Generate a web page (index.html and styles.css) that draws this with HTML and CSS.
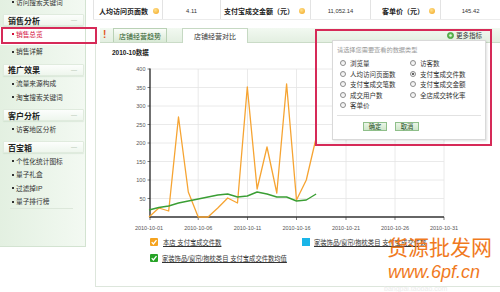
FILE: index.html
```html
<!DOCTYPE html>
<html lang="zh-CN">
<head>
<meta charset="utf-8">
<title>量子统计 - 销售总览</title>
<link rel="stylesheet" href="styles.css">
</head>
<body>
<div class="page">
  <aside class="sidebar">
    <ul class="items first">
      <li>访问搜索关键词</li>
    </ul>
    <section class="group">
      <h3>销售分析<span class="fold">—</span></h3>
      <ul class="items">
        <li class="active">销售总览</li>
        <li>销售详解</li>
      </ul>
    </section>
    <section class="group">
      <h3>推广效果<span class="fold">—</span></h3>
      <ul class="items">
        <li>流量来源构成</li>
        <li>淘宝搜索关键词</li>
      </ul>
    </section>
    <section class="group">
      <h3>客户分析<span class="fold">—</span></h3>
      <ul class="items">
        <li>访客地区分析</li>
      </ul>
    </section>
    <section class="group">
      <h3>百宝箱<span class="fold">—</span></h3>
      <ul class="items">
        <li>个性化统计图标</li>
        <li>量子礼盒</li>
        <li>过滤掉IP</li>
        <li>量子排行榜</li>
      </ul>
    </section>
  </aside>

  <main class="main">
    <div class="stats">
      <div class="cell label c1">人均访问页面数<span class="tip"></span></div>
      <div class="cell c2">4.11</div>
      <div class="cell label c3">支付宝成交金额（元）<span class="tip"></span></div>
      <div class="cell c4">11,052.14</div>
      <div class="cell label c5">客单价（元）<span class="tip"></span></div>
      <div class="cell c6">145.42</div>
    </div>

    <div class="tabbar">
      <span class="alert">!</span>
      <span class="tab">店铺经营趋势</span>
      <span class="tab on">店铺经营对比</span>
    </div>

    <div class="panel">
      <div class="title">2010-10数据</div>
      <svg class="chart" width="404" height="177" viewBox="96 57 404 177">
        <g stroke="#e4e4e4" stroke-width="0.8">
          <line x1="150" y1="198.5" x2="444" y2="198.5"/>
          <line x1="150" y1="180" x2="444" y2="180"/>
          <line x1="150" y1="161.5" x2="444" y2="161.5"/>
          <line x1="150" y1="143" x2="444" y2="143"/>
          <line x1="150" y1="124.5" x2="444" y2="124.5"/>
          <line x1="150" y1="106" x2="444" y2="106"/>
          <line x1="150" y1="87.5" x2="444" y2="87.5"/>
          <line x1="150" y1="69" x2="444" y2="69"/>
          <line x1="198.2" y1="69" x2="198.2" y2="217"/>
          <line x1="247.5" y1="69" x2="247.5" y2="217"/>
          <line x1="296.5" y1="69" x2="296.5" y2="217"/>
          <line x1="346" y1="69" x2="346" y2="217"/>
          <line x1="395" y1="69" x2="395" y2="217"/>
          <line x1="444" y1="69" x2="444" y2="217"/>
        </g>
        <g stroke="#444" stroke-width="0.7">
          <line x1="147.5" y1="69" x2="150" y2="69"/>
          <line x1="147.5" y1="87.5" x2="150" y2="87.5"/>
          <line x1="147.5" y1="106" x2="150" y2="106"/>
          <line x1="147.5" y1="124.5" x2="150" y2="124.5"/>
          <line x1="147.5" y1="143" x2="150" y2="143"/>
          <line x1="147.5" y1="161.5" x2="150" y2="161.5"/>
          <line x1="147.5" y1="180" x2="150" y2="180"/>
          <line x1="147.5" y1="198.5" x2="150" y2="198.5"/>
          <line x1="150" y1="217" x2="150" y2="220"/>
          <line x1="198.2" y1="217" x2="198.2" y2="220"/>
          <line x1="247.5" y1="217" x2="247.5" y2="220"/>
          <line x1="296.5" y1="217" x2="296.5" y2="220"/>
          <line x1="346" y1="217" x2="346" y2="220"/>
          <line x1="395" y1="217" x2="395" y2="220"/>
          <line x1="444" y1="217" x2="444" y2="220"/>
        </g>
        <line x1="150" y1="68.5" x2="150" y2="217.6" stroke="#222" stroke-width="1.3"/>
        <line x1="149.4" y1="217" x2="444" y2="217" stroke="#333" stroke-width="1.3"/>
        <g class="ylab" text-anchor="end">
          <text x="145.5" y="71">400</text>
          <text x="145.5" y="89.5">350</text>
          <text x="145.5" y="108">300</text>
          <text x="145.5" y="126.5">250</text>
          <text x="145.5" y="145">200</text>
          <text x="145.5" y="163.5">150</text>
          <text x="145.5" y="182">100</text>
          <text x="145.5" y="200.5">50</text>
        </g>
        <g class="xlab" text-anchor="middle">
          <text x="149" y="230">2010-10-01</text>
          <text x="198.2" y="230">2010-10-06</text>
          <text x="247.5" y="230">2010-10-11</text>
          <text x="296.5" y="230">2010-10-16</text>
          <text x="346" y="230">2010-10-21</text>
          <text x="395" y="230">2010-10-26</text>
          <text x="444" y="230">2010-10-31</text>
        </g>
        <polyline fill="none" stroke="#f6a432" stroke-width="1.3" stroke-linejoin="round"
          points="149,217 158.8,208 168.7,211 178.5,117 188.3,192 198.2,217 208,217 217.8,208 227.7,198 237.5,203 247.3,87 257.1,189 267,147 276.8,193 286.6,84 296.5,200 306.3,180 316.1,138"/>
        <polyline fill="none" stroke="#3a9e34" stroke-width="1.4" stroke-linejoin="round"
          points="149,210 158.8,207.5 168.7,206 178.5,203 188.3,201 198.2,199 208,197 217.8,195 227.7,194 237.5,197 247.3,196 257.1,192 267,194 276.8,197 286.6,197 296.5,201 306.3,200 316.1,194"/>
      </svg>
      <div class="legend">
        <div class="legend-row">
          <div class="legend-item wide">
            <svg class="chk" width="8" height="8" viewBox="0 0 8 8"><rect width="8" height="8" rx="1" fill="#f5a31f"/><path d="M1.7 4.1 L3.4 5.9 L6.5 2.1" fill="none" stroke="#fff" stroke-width="1.3"/></svg>
            <span class="ltext">本店 支付宝成交件数</span>
          </div>
          <div class="legend-item">
            <span class="swatch"></span>
            <span class="ltext">家装饰品/窗帘/抱枕类目 支付宝成交件数</span>
          </div>
        </div>
        <div class="legend-row">
          <div class="legend-item">
            <svg class="chk" width="8" height="8" viewBox="0 0 8 8"><rect width="8" height="8" rx="1" fill="#27a327"/><path d="M1.7 4.1 L3.4 5.9 L6.5 2.1" fill="none" stroke="#fff" stroke-width="1.3"/></svg>
            <span class="ltext">家装饰品/窗帘/抱枕类目 支付宝成交件数均值</span>
          </div>
        </div>
      </div>
    </div>
  </main>
</div>

<div class="side-mark"></div>

<div class="popup">
  <div class="more">
    <svg width="7" height="7" viewBox="0 0 7 7"><circle cx="3.5" cy="3.5" r="3.1" fill="#5cb84e" stroke="#2f8a2a" stroke-width="0.6"/><circle cx="3.5" cy="3.5" r="1.3" fill="#e2f4dc"/></svg>
    <span>更多指标</span>
  </div>
  <div class="chooser">
    <p class="hint">请选择您需要查看的数据类型</p>
    <div class="options">
      <label class="opt"><span class="radio"></span>浏览量</label>
      <label class="opt"><span class="radio"></span>访客数</label>
      <label class="opt"><span class="radio"></span>人均访问页面数</label>
      <label class="opt"><span class="radio checked"></span>支付宝成交件数</label>
      <label class="opt"><span class="radio"></span>支付宝成交笔数</label>
      <label class="opt"><span class="radio"></span>支付宝成交金额</label>
      <label class="opt"><span class="radio"></span>成交用户数</label>
      <label class="opt"><span class="radio"></span>全店成交转化率</label>
      <label class="opt"><span class="radio"></span>客单价</label>
    </div>
    <div class="actions">
      <button class="btn">确定</button>
      <button class="btn">取消</button>
    </div>
  </div>
</div>

<div class="watermark">
  <div class="wm-cn">货源批发网</div>
  <div class="wm-en">www.6pf.cn</div>
  <div class="wm-faint">bangpai.taobao.com</div>
</div>
</body>
</html>
```

FILE: styles.css
```css
* { margin: 0; padding: 0; box-sizing: border-box; }
html, body { width: 500px; height: 292px; overflow: hidden; background: #fff; }
body {
  position: relative;
  font-family: "Liberation Sans", "Noto Sans CJK SC", sans-serif;
  color: #333;
}

.page { display: flex; align-items: flex-start; }

/* ---------- sidebar ---------- */
.sidebar {
  flex: none;
  width: 86px;
  height: 247px;
  overflow: hidden;
  background: linear-gradient(90deg, #e3f0e1, #edf6ec 65%, #f3f9f2);
  border-right: 1px solid #d3e3d1;
  border-bottom: 1px solid #d3e3d1;
}
.items { list-style: none; }
.items.first { margin-top: -5px; }
.items li {
  height: 13.5px;
  display: flex;
  align-items: center;
  font-size: 6.7px;
  color: #333;
  white-space: nowrap;
}
.items li::before {
  content: "";
  width: 2px;
  height: 2px;
  background: #333;
  margin: 1px 2px 0 12px;
}
.items li.active {
  box-sizing: content-box;
  padding-bottom: 4px;
  color: #d4103c;
  background: #fff;
}
.items li.active::before { background: #d4103c; }
.group:last-child .items::after {
  content: "";
  display: block;
  height: 1px;
  margin: 0 12px 0 10px;
  background: #dce7da;
}
.group h3 {
  margin: 5.5px 1px 1px 3px;
  height: 12px;
  display: flex;
  justify-content: space-between;
  align-items: center;
  padding: 0 6px 0 4px;
  font-size: 8px;
  font-weight: bold;
  color: #222;
  background: linear-gradient(#fcfefc, #eef6ed);
  border: 1px solid #e0ebde;
  border-radius: 1px;
  box-shadow: 0 1px 1px rgba(160, 190, 160, 0.25);
}
.fold { font-size: 6px; font-weight: normal; color: #a3b6a1; }

.side-mark {
  position: absolute;
  left: 1px;
  top: 27px;
  width: 96px;
  height: 17px;
  border: 2px solid #d62a58;
}

/* ---------- main ---------- */
.main { flex: none; width: 420px; }

.stats {
  display: flex;
  height: 20px;
  margin-left: 7px;
  border-bottom: 1px solid #ececec;
}
.cell {
  display: flex;
  align-items: center;
  justify-content: center;
  padding-top: 3px;
  border-left: 1px solid #e3e3e3;
  font-size: 5.8px;
  color: #333;
  white-space: nowrap;
}
.cell.label {
  justify-content: flex-start;
  gap: 5px;
  padding-left: 5px;
  font-size: 7px;
  font-weight: bold;
  color: #222;
}
.c1 { width: 69px; }
.c2 { width: 58px; }
.c3 { width: 90px; padding-left: 3px !important; }
.c4 { width: 60px; }
.c5 { width: 70px; padding-left: 11px !important; }
.c6 { width: 60px; }
.tip {
  width: 6px;
  height: 6px;
  border-radius: 50%;
  background: radial-gradient(circle at 40% 35%, #ffe08a, #f2a41c);
}

.tabbar {
  margin: 8px 0 0 14px;
  height: 15px;
  display: flex;
  align-items: flex-end;
  background: linear-gradient(#f2f9f1, #e3efe1);
  border-bottom: 1px solid #cadbc7;
}
.alert {
  align-self: center;
  width: 4px;
  margin-left: 3px;
  font-size: 10px;
  line-height: 10px;
  font-weight: bold;
  color: #e2561e;
}
.tab {
  height: 14px;
  display: flex;
  align-items: center;
  justify-content: center;
  font-size: 7px;
  border: 1px solid #b9d1b5;
  border-bottom: none;
}
.tab:not(.on) {
  width: 54px;
  margin-left: 6px;
  color: #2d5b2a;
  background: linear-gradient(#fafdf9, #d8e9d5);
}
.tab.on {
  width: 66px;
  height: 15px;
  margin-left: 15px;
  margin-bottom: -1px;
  color: #333;
  background: #fff;
  border-color: #c6d9c3;
}

.panel {
  margin-left: 9px;
  width: 415px;
  height: 244px;
  padding-top: 5px;
  border: 1px solid #dde6dc;
  border-top: none;
}
.title {
  height: 9px;
  line-height: 9px;
  padding-left: 16px;
  font-size: 6.5px;
  font-weight: bold;
  color: #222;
}
.chart { display: block; }
.chart text {
  font-family: "Liberation Sans", sans-serif;
  font-size: 5.5px;
  fill: #555;
}

.legend { padding-left: 54px; }
.legend-row { display: flex; height: 16px; align-items: center; }
.legend-item {
  display: flex;
  align-items: center;
  gap: 4px;
  font-size: 6.3px;
  color: #333;
  white-space: nowrap;
}
.legend-item.wide { width: 152px; gap: 5px; }
.chk { display: block; flex: none; }
.swatch { width: 8px; height: 8px; flex: none; background: #1ab5e8; }
.ltext { text-decoration: underline; }

/* ---------- popup ---------- */
.popup {
  position: absolute;
  left: 315px;
  top: 29px;
  width: 177px;
  height: 117px;
  border: 2px solid #d62a58;
}
.more {
  height: 9px;
  display: flex;
  justify-content: flex-end;
  align-items: flex-start;
  gap: 2px;
  padding: 1px 8px 0 0;
  font-size: 6.5px;
  line-height: 7px;
  color: #333;
}
.more svg { display: block; margin-top: 0; }
.chooser {
  margin-left: 15px;
  width: 154px;
  height: 100px;
  padding: 5px 4px 0;
  background: #fff;
  border: 1px solid #d9d9d9;
  box-shadow: 1px 1px 2px rgba(0, 0, 0, 0.12);
}
.hint { height: 8px; line-height: 8px; font-size: 6.2px; color: #9a9a9a; white-space: nowrap; }
.options {
  margin: 3.75px 0 0 3px;
  display: grid;
  grid-template-columns: 70px 1fr;
  grid-auto-rows: 10.5px;
}
.opt {
  display: flex;
  align-items: center;
  gap: 4px;
  font-size: 6.5px;
  color: #333;
  white-space: nowrap;
}
.radio {
  position: relative;
  width: 6px;
  height: 6px;
  flex: none;
  border-radius: 50%;
  border: 1px solid #8c8c8c;
  background: linear-gradient(#e8e8e8, #fff);
}
.radio.checked::after {
  content: "";
  position: absolute;
  left: 1px;
  top: 1px;
  width: 2px;
  height: 2px;
  border-radius: 50%;
  background: #333;
}
.actions {
  margin-top: 4.75px;
  padding: 6px 0 0 26px;
  border-top: 1px solid #e2e2e2;
  display: flex;
  gap: 8px;
}
.btn {
  width: 24px;
  height: 9px;
  font-family: "Liberation Sans", "Noto Sans CJK SC", sans-serif;
  font-size: 6.3px;
  line-height: 7px;
  color: #1f4d1f;
  background: linear-gradient(#eaf5e7, #cfe6ca);
  border: 1px solid #8fbf8a;
}

/* ---------- watermark ---------- */
.watermark {
  position: absolute;
  left: 384px;
  top: 231px;
  width: 116px;
  pointer-events: none;
}
.wm-cn {
  height: 30px;
  line-height: 30px;
  font-family: "Noto Sans CJK SC", sans-serif;
  font-size: 21px;
  color: #f07a1e;
  padding-left: 3px;
}
.wm-en {
  height: 22px;
  line-height: 22px;
  padding-left: 4px;
  font-family: "Liberation Sans", sans-serif;
  font-style: italic;
  font-size: 18px;
  color: #f07a1e;
}
.wm-faint {
  margin-top: 2px;
  height: 8px;
  line-height: 8px;
  font-family: "Liberation Sans", sans-serif;
  font-size: 7px;
  color: #ececec;
}
```
